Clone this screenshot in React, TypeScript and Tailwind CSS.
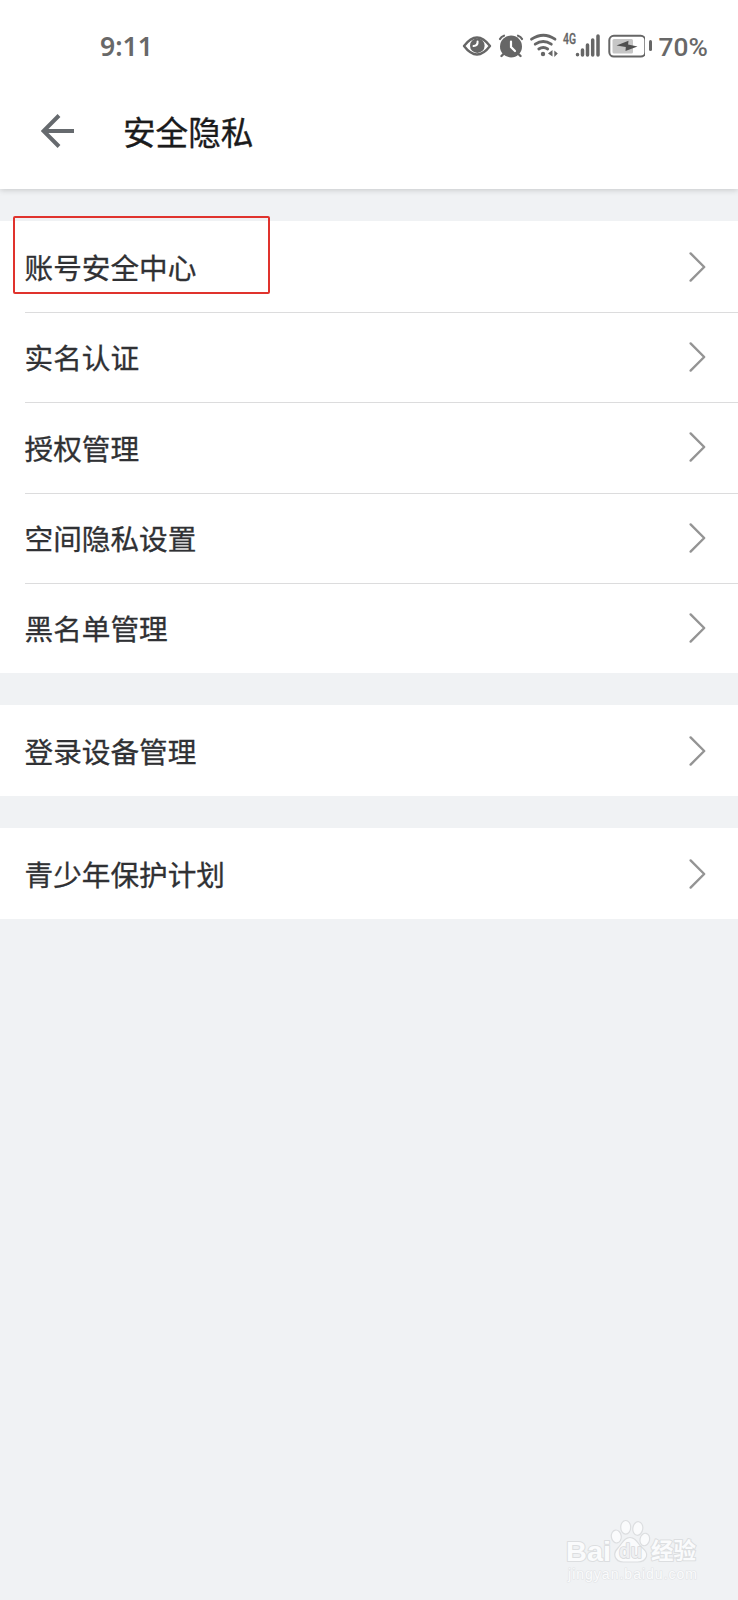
const CJK = "font-['Noto_Sans_CJK_SC',sans-serif]";

function Chevron() {
  return (
    <svg className="mr-[32px] h-[32px] w-[18px]" viewBox="0 0 18 32" fill="none" stroke="#949494" strokeWidth="2.4" strokeLinecap="round" strokeLinejoin="round">
      <path d="M2.6 2.4 16.2 16 2.6 29.6" />
    </svg>
  );
}

function Row({ label, height, first = false }: { label: string; height: string; first?: boolean }) {
  return (
    <li className={`flex ${height} pl-[24.5px]`}>
      <div className={`flex flex-1 items-center justify-between ${first ? '' : 'border-t border-[#dcdcdd] pb-[2px]'}`}>
        <span className="pt-[1px] text-[28.65px] leading-[40px] text-[#303134] [-webkit-text-stroke:0.3px_#303134]">{label}</span>
        <Chevron />
      </div>
    </li>
  );
}

function StatusIcons() {
  return (
    <svg className="h-[50px] w-[195px]" viewBox="450 20.5 195 50" fill="none" stroke="#666666">
      <path d="M464 45.500Q477 28.500 490 45.500Q477 62.500 464 45.500Z" strokeWidth="2.400" strokeLinejoin="round" />
      <circle cx="477.300" cy="45.200" r="7.300" fill="#666666" stroke="none" />
      <path d="M477.600 41q.3 4-4 4.600" stroke="#ffffff" strokeWidth="2" strokeLinecap="round" />

      <circle cx="511" cy="46" r="11" fill="#666666" stroke="none" />
      <path d="M500 38.500q1.200-2.500 4-3.300M522 38.500q-1.200-2.500-4-3.300" strokeWidth="2.200" strokeLinecap="round" />
      <path d="M503.500 53.500l-2 2M518.500 53.500l2 2" strokeWidth="2.400" strokeLinecap="round" />
      <path d="M511 41v5.500l4 4" stroke="#ffffff" strokeWidth="2.200" strokeLinecap="round" />

      <g strokeWidth="2.800" strokeLinecap="round">
        <path d="M531.500 38.700q12-8 23.500 0" />
        <path d="M535.200 43.700q8-5.500 16.100 0" />
        <path d="M538.800 48.500q4.500-3 8.900 0" />
      </g>
      <circle cx="543" cy="53.500" r="2.200" fill="#666666" stroke="none" />
      <path d="M552.500 49.500v6.500l-4.500-3zM554.300 50v6.500l3.500-3.500z" fill="#666666" stroke="none" />
      <text x="563" y="43.500" fill="#666666" stroke="#666666" strokeWidth="0.300" fontFamily="Roboto, sans-serif" fontWeight="500" fontSize="14" textLength="13" lengthAdjust="spacingAndGlyphs">4G</text>
      <g strokeWidth="3.500" strokeLinecap="round">
        <path d="M577.500 54v.3M582.500 49.500v5M587.500 44.500v10M592.700 39.500v15M598 35.500v19" />
      </g>

      <rect x="609.300" y="35.300" width="36" height="20.800" rx="4.500" strokeWidth="2" />
      <rect x="612.500" y="38.500" width="20.500" height="14.500" rx="1.500" fill="#c6c6c6" stroke="none" />
      <path d="M616.500 45l12-4.700-.4 3.700 9.400 2-12 4.600.3-4.200z" fill="#505050" stroke="none" />
    </svg>
  );
}

function Watermark() {
  return (
    <div className="absolute right-[37px] bottom-[12px]">
      <svg className="h-[70px] w-[140px]" viewBox="561 1518 140 70">
        <g fill="#fafbfc" stroke="#dcdee0" strokeWidth="1.200">
          <ellipse cx="616.300" cy="1536.500" rx="5" ry="6.500" transform="rotate(-8 616.300 1536.500)" />
          <ellipse cx="625.700" cy="1527.300" rx="5" ry="6.800" />
          <ellipse cx="637.800" cy="1528.500" rx="5" ry="6.800" transform="rotate(8 637.800 1528.500)" />
          <ellipse cx="644.800" cy="1539.500" rx="4.800" ry="6.300" transform="rotate(12 644.800 1539.500)" />
          <path d="M630 1537.500c5 0 7 4 10 8 4 4 7.500 6 6.500 11-1.500 5-6 5.500-9 5.500h-14c-3 0-7-.5-8.500-5.500-1.500-5 2-7 5-11 3-4 5-8 10-8z" />
        </g>
        <g fontFamily="Liberation Sans, sans-serif" fontWeight="700" paintOrder="stroke" strokeLinejoin="round">
          <text x="566" y="1560.500" fontSize="28.500" textLength="45" lengthAdjust="spacingAndGlyphs" fill="#fafbfc" stroke="#dcdee0" strokeWidth="2">Bai</text>
          <text x="619" y="1557.500" fontSize="21" textLength="23" lengthAdjust="spacingAndGlyphs" fill="#eff0f2" stroke="#d6d8da" strokeWidth="1.600">du</text>
          <text x="651" y="1559" fontFamily="Noto Sans CJK SC, sans-serif" fontSize="22.500" textLength="45" lengthAdjust="spacingAndGlyphs" fill="#fafbfc" stroke="#dcdee0" strokeWidth="2">经验</text>
          <text x="568" y="1579" fontWeight="400" fontSize="14" textLength="129" fill="#fafbfc" stroke="#e2e4e6" strokeWidth="1.200">jingyan.baidu.com</text>
        </g>
      </svg>
    </div>
  );
}

export default function App() {
  return (
    <div className={`relative flex h-[1600px] w-[738px] flex-col overflow-hidden bg-[#f0f2f4] ${CJK}`}>
      <header className="z-10 h-[189px] shrink-0 bg-white shadow-[0_1px_6px_rgba(0,0,0,0.18)]">
        <div className="flex h-[92px] items-center pl-[100px] font-['Roboto',sans-serif] font-medium text-[#686868]">
          <span className="w-[350px] font-['Noto_Sans'] text-[26.5px] leading-[30px] font-semibold">9:11</span>
          <StatusIcons />
          <span className="mt-[-1px] ml-[3.500px] h-[11px] w-[3px] rounded-full bg-[#666666]" />
          <span className="mt-[2px] ml-[7px] text-[26.3px] leading-[30px]">70%</span>
        </div>
        <div className="flex h-[78px] items-center pl-[41px]">
          <svg className="h-[34px] w-[34px]" viewBox="0 0 34 34" fill="none" stroke="#666a6e" strokeWidth="4">
            <path d="M33 17H3M18 1.500 2.500 17 18 32.500" />
          </svg>
          <h1 className="ml-[48px] text-[32.600px] leading-[44px] text-[#1b1b1c] [-webkit-text-stroke:0.35px_#1b1b1c]">安全隐私</h1>
        </div>
      </header>
      <main className="flex flex-col gap-[32px] pt-[32px]">
        <ul className="bg-white">
          <Row label="账号安全中心" height="h-[91px]" first />
          <Row label="实名认证" height="h-[90px]" />
          <Row label="授权管理" height="h-[91px]" />
          <Row label="空间隐私设置" height="h-[90px]" />
          <Row label="黑名单管理" height="h-[90px]" />
        </ul>
        <ul className="bg-white">
          <Row label="登录设备管理" height="h-[91px]" first />
        </ul>
        <ul className="bg-white">
          <Row label="青少年保护计划" height="h-[91px]" first />
        </ul>
      </main>
      <div className="absolute top-[215.500px] left-[13px] h-[78.500px] w-[257px] rounded-[2px] border-2 border-[#e0332d]" />
      <Watermark />
    </div>
  );
}
